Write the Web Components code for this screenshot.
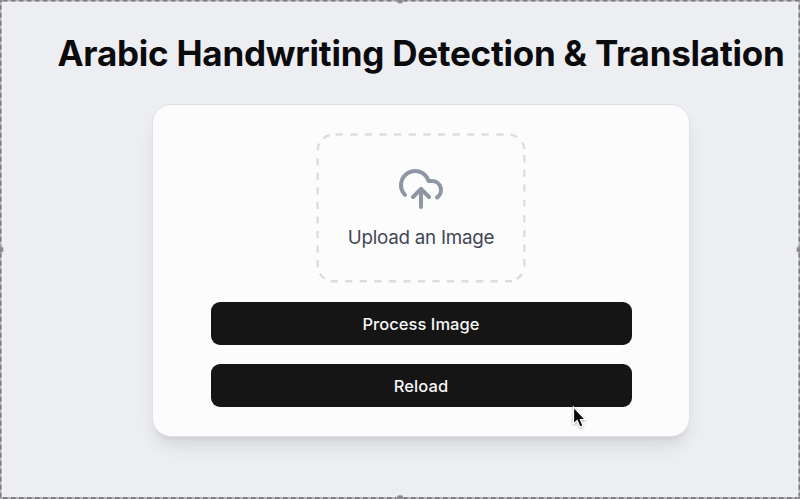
<!DOCTYPE html>
<html lang="en">
<head>
<meta charset="utf-8">
<title>Arabic Handwriting Detection &amp; Translation</title>
<style>
html,body{margin:0;height:100%;overflow:hidden;background:#edeef2;font-family:Inter,"Liberation Sans",sans-serif}
</style>
</head>
<body>
<capture-frame>
  <translation-page heading="Arabic Handwriting Detection &amp; Translation">
    <upload-zone>Upload an Image</upload-zone>
    <action-button>Process Image</action-button>
    <action-button>Reload</action-button>
  </translation-page>
  <mouse-pointer slot="overlay"></mouse-pointer>
</capture-frame>
<script>
class Base extends HTMLElement {
  connectedCallback() {
    if (!this.shadowRoot) this.attachShadow({mode: 'open'}).innerHTML = this.view();
  }
}
customElements.define('capture-frame', class extends Base {
  view() { return `<style>
    :host{display:block;position:relative;width:800px;height:499px;overflow:hidden}
    .frame{position:absolute;inset:0;pointer-events:none}
  </style><slot></slot>
  <svg class="frame" width="800" height="499" fill="none">
    <path d="M2.5 2.5H797.5V496.5H2.5Z" stroke="#f3f3f5"/>
    <path d="M0 .5H800M0 498H800" stroke="#b4b4b6" stroke-width="2"/>
    <path d="M.5 0V499M799.5 0V499" stroke="#b4b4b6" stroke-width="2"/>
    <path d="M3 .5H800M3 498H800M.5 5V499M799.5 5V499" stroke="#7c7c7e" stroke-width="2" stroke-dasharray="4.5 3.5"/>
    <g fill="#88888a" stroke="#c9c9cb" stroke-width=".7"><circle cx="400" cy="0" r="3.5"/><circle cx="400" cy="498.5" r="3.5"/><circle cx="0" cy="249.5" r="3.5"/><circle cx="800" cy="249.5" r="3.5"/><circle cx="0" cy="0" r="3"/><circle cx="800" cy="499" r="3"/></g>
  </svg><slot name="overlay"></slot>`; }
});
customElements.define('translation-page', class extends Base {
  view() { return `<style>
    :host{display:flex;flex-direction:column;align-items:center;box-sizing:border-box;width:842px;padding-top:32px}
    h1{margin:0 0 29px;font-size:35px;line-height:43px;font-weight:680;letter-spacing:-.24px;color:#0b0b0d;white-space:nowrap}
    main{display:flex;flex-direction:column;align-items:center;box-sizing:border-box;width:538px;height:333px;padding-top:28px;background:#fcfcfc;border:1px solid #e0e1e4;border-radius:19px;box-shadow:0 12px 18px -4px rgba(0,0,0,.1),0 5px 7px -5px rgba(0,0,0,.1)}
  </style><h1></h1><main><slot></slot></main>`; }
  connectedCallback() {
    super.connectedCallback();
    this.shadowRoot.querySelector('h1').textContent = this.getAttribute('heading');
  }
});
customElements.define('upload-zone', class extends Base {
  view() { return `<style>
    :host{display:flex;flex-direction:column;align-items:center;position:relative;box-sizing:border-box;width:210px;height:150px;padding-top:32px;margin-bottom:19px;color:#414754;font-size:18.8px;line-height:28px}
    .edge{position:absolute;inset:0}
    .label{margin-top:11px;white-space:nowrap;letter-spacing:-.25px}
  </style>
  <svg class="edge" width="210" height="150" fill="none" stroke="#dcdddf" stroke-width="2.4">
    <path d="M19.7 1.5H187.5" stroke-dasharray="7.2 7.4"/>
    <path d="M208.4 22V58.5" stroke-dasharray="7.2 7.4"/>
    <path d="M208.4 66.7V73.5"/>
    <path d="M208.4 82.3V133.4" stroke-dasharray="7.2 7.4"/>
    <path d="M14.7 148.3H197" stroke-dasharray="7.2 7.33"/>
    <path d="M1.6 25.3V134.3" stroke-dasharray="7.2 7.33"/>
    <path d="M1.6 17.5A16 16 0 0 1 17.6 1.5" stroke-dasharray="7.3 6.4"/>
    <path d="M192.4 1.5A16 16 0 0 1 208.4 17.5" stroke-dasharray="0 2 7.3 7 7.3 20"/>
    <path d="M208.4 132.3A16 16 0 0 1 192.4 148.3" stroke-dasharray="0 9 7.3 30"/>
    <path d="M17.6 148.3A16 16 0 0 1 1.6 132.3" stroke-dasharray="0 9 7.3 30"/>
  </svg>
  <svg width="48" height="48" viewBox="0 0 24 24" fill="none" stroke="#8f96a3" stroke-width="2" stroke-linecap="round" stroke-linejoin="round"><path d="M4 14.899A7 7 0 1 1 15.71 8h1.79a4.5 4.5 0 0 1 2.5 8.242"/><path d="M12 12v9"/><path d="m16 16-4-4-4 4"/></svg>
  <span class="label"><slot></slot></span>`; }
});
customElements.define('action-button', class extends Base {
  view() { return `<style>
    :host{display:block;width:421px;height:43px;margin-bottom:19.4px}
    button{display:block;width:100%;height:100%;padding:1px 0 0;border:0;border-radius:9px;background:#151515;color:#f7f7f7;font:460 16.5px/42px Inter,"Liberation Sans",sans-serif;letter-spacing:.05px}
  </style><button type="button"><slot></slot></button>`; }
});
customElements.define('mouse-pointer', class extends Base {
  view() { return `<style>
    :host{position:absolute;left:572px;top:405px;width:16px;height:25px;filter:drop-shadow(0 1px 1px rgba(0,0,0,.3))}
  </style><svg width="16" height="25"><path d="M1.5 2V19L5.2 15.6L8 22L11 20.7L8.4 14.5H13.3Z" fill="#090909" stroke="#fff" stroke-width="1.2"/></svg>`; }
});
</script>
</body>
</html>
